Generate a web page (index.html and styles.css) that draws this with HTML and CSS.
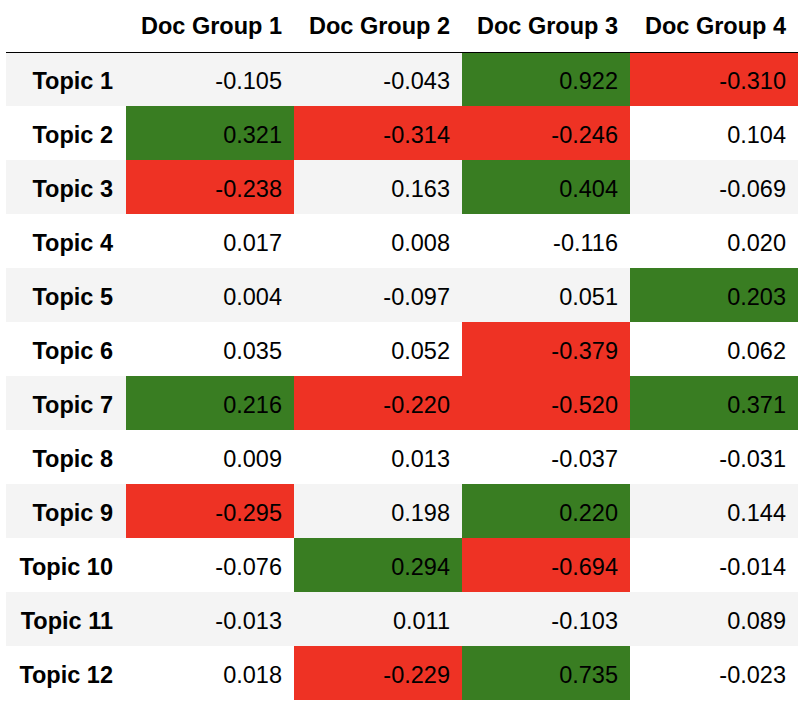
FILE: index.html
```html
<!DOCTYPE html>
<html>
<head>
<meta charset="utf-8">
<link rel="stylesheet" href="styles.css">
</head>
<body>
<table class="grid">
  <thead>
    <tr><th class="blank"></th><th>Doc Group 1</th><th>Doc Group 2</th><th>Doc Group 3</th><th>Doc Group 4</th></tr>
  </thead>
  <tbody>
    <tr><th>Topic 1</th><td>-0.105</td><td>-0.043</td><td class="pos">0.922</td><td class="neg">-0.310</td></tr>
    <tr><th>Topic 2</th><td class="pos">0.321</td><td class="neg">-0.314</td><td class="neg">-0.246</td><td>0.104</td></tr>
    <tr><th>Topic 3</th><td class="neg">-0.238</td><td>0.163</td><td class="pos">0.404</td><td>-0.069</td></tr>
    <tr><th>Topic 4</th><td>0.017</td><td>0.008</td><td>-0.116</td><td>0.020</td></tr>
    <tr><th>Topic 5</th><td>0.004</td><td>-0.097</td><td>0.051</td><td class="pos">0.203</td></tr>
    <tr><th>Topic 6</th><td>0.035</td><td>0.052</td><td class="neg">-0.379</td><td>0.062</td></tr>
    <tr><th>Topic 7</th><td class="pos">0.216</td><td class="neg">-0.220</td><td class="neg">-0.520</td><td class="pos">0.371</td></tr>
    <tr><th>Topic 8</th><td>0.009</td><td>0.013</td><td>-0.037</td><td>-0.031</td></tr>
    <tr><th>Topic 9</th><td class="neg">-0.295</td><td>0.198</td><td class="pos">0.220</td><td>0.144</td></tr>
    <tr><th>Topic 10</th><td>-0.076</td><td class="pos">0.294</td><td class="neg">-0.694</td><td>-0.014</td></tr>
    <tr><th>Topic 11</th><td>-0.013</td><td>0.011</td><td>-0.103</td><td>0.089</td></tr>
    <tr><th>Topic 12</th><td>0.018</td><td class="neg">-0.229</td><td class="pos">0.735</td><td>-0.023</td></tr>
  </tbody>
</table>
</body>
</html>
```
FILE: styles.css
```css
html, body {
  margin: 0;
  padding: 0;
  background: #ffffff;
}
body {
  padding-left: 6px;
  font-family: "Liberation Sans", Arial, Helvetica, sans-serif;
  color: #000;
}
.grid {
  border-collapse: collapse;
  border-spacing: 0;
  table-layout: fixed;
  width: 792px;
  font-size: 23.5px;
}
.grid th, .grid td {
  padding: 4px 12px 0 0;
  text-align: right;
  vertical-align: middle;
  white-space: nowrap;
  box-sizing: border-box;
}
.grid th.blank { width: 120px; }
.grid thead th {
  height: 52px;
  font-weight: bold;
  border-bottom: 1px solid #000;
  padding-top: 3px;
  padding-bottom: 0;
  vertical-align: top;
  line-height: 46px;
}
.grid thead th:not(.blank) { width: 168px; }
.grid tbody th {
  font-weight: bold;
  padding-right: 13px;
}
.grid tbody tr { height: 54px; }
.grid tbody tr:nth-child(odd) { background: #f4f4f4; }
.grid td { font-weight: normal; }
.grid td.pos { background: #397d22; }
.grid td.neg { background: #ee3224; }
```
